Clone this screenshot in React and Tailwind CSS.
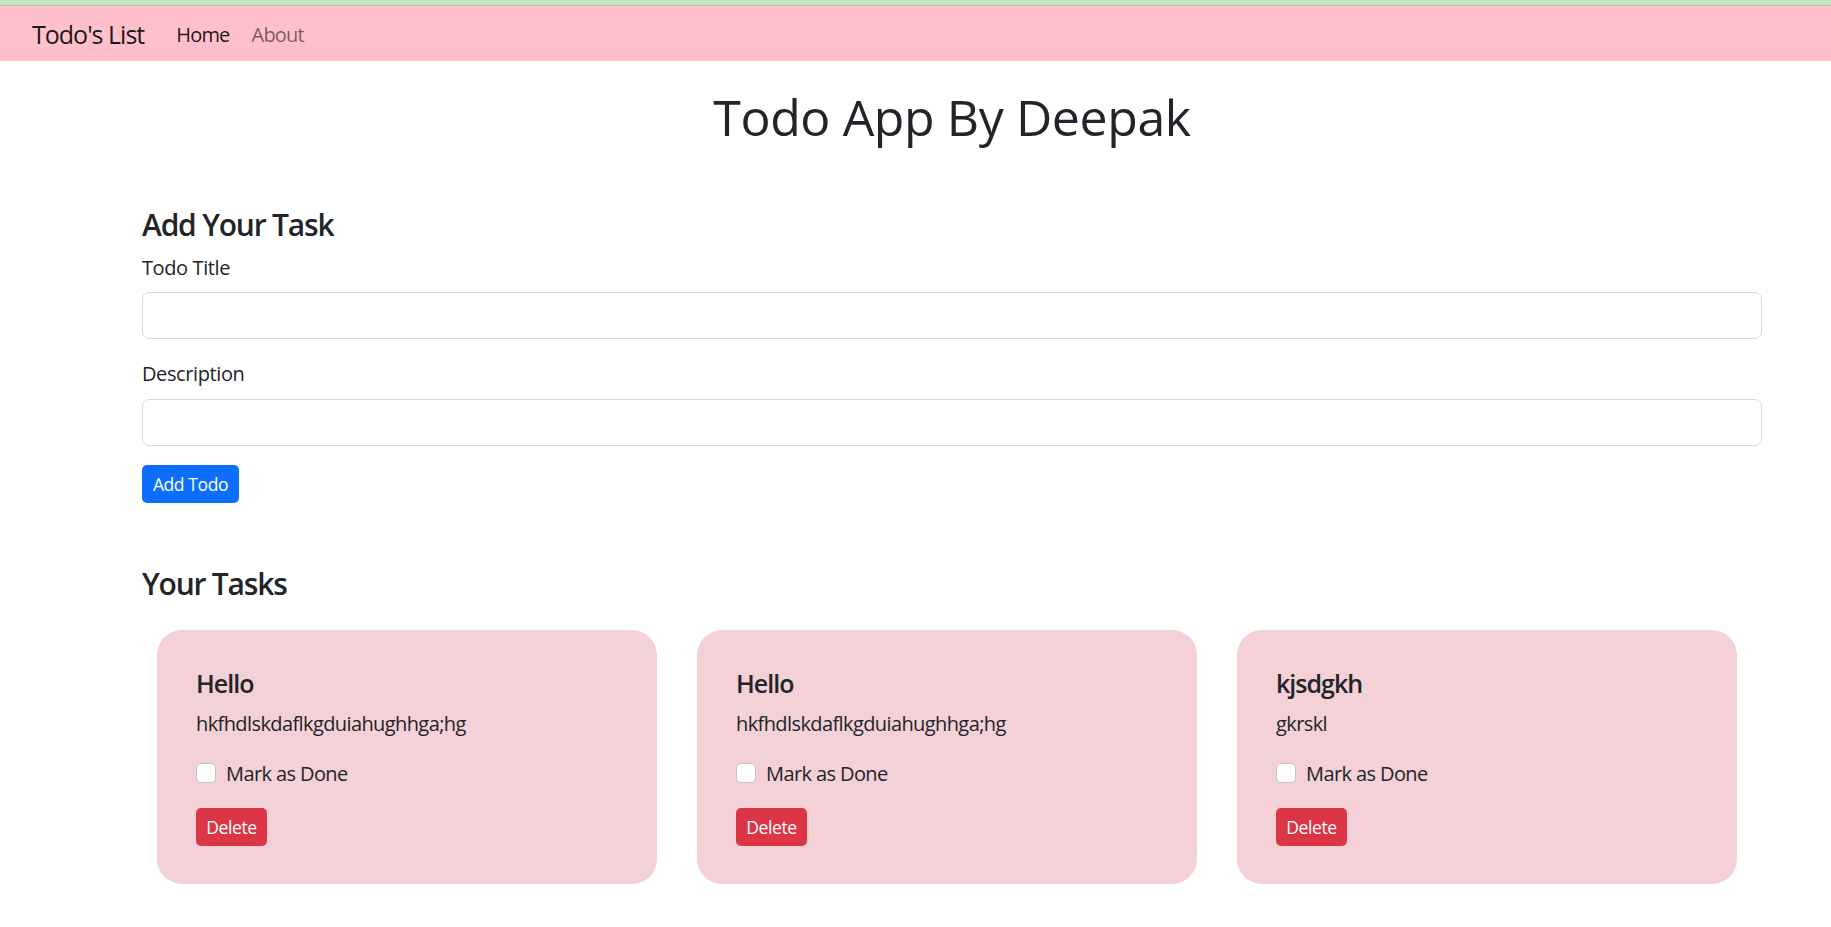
import React, { useState } from "react";

const TODOS = [
    { sno: 1, title: "Hello", desc: "hkfhdlskdaflkgduiahughhga;hg" },
    { sno: 2, title: "Hello", desc: "hkfhdlskdaflkgduiahughhga;hg" },
    { sno: 3, title: "kjsdgkh", desc: "gkrskl" },
];

const TodoItem = ({ todo, onDelete }) => {
    return (
        <div className="w-[500px] h-[254px] rounded-[25px] bg-[#f4d0d7] px-[39px] pt-[38px]">
            <h5 className="text-[25px] leading-[30px] font-semibold tracking-[-0.04em]">{todo.title}</h5>
            <p className="mt-[11px] text-[20px] leading-[30px] tracking-[-0.03em]">{todo.desc}</p>
            <label className="mt-[20px] flex items-center h-[30px] text-[20px] tracking-[-0.03em]">
                <input type="checkbox" className="appearance-none w-[20px] h-[20px] bg-white border border-[#c4c4c4] rounded-[5px] mr-[10px] mt-[-2px]" />
                <span>Mark as Done</span>
            </label>
            <button
                onClick={() => onDelete(todo)}
                className="mt-[19px] w-[71px] h-[38px] rounded-[5px] bg-[#dc3545] text-white text-[17.5px] flex items-center justify-center"
            >
                Delete
            </button>
        </div>
    );
};

export default function App() {
    const [todos, setTodos] = useState(TODOS);
    const [title, setTitle] = useState("");
    const [desc, setDesc] = useState("");

    const onDelete = (todo) => {
        setTodos(todos.filter((t) => t !== todo));
    };

    const addTodo = (e) => {
        e.preventDefault();
        if (!title || !desc) return;
        setTodos([...todos, { sno: todos.length + 1, title: title, desc: desc }]);
        setTitle("");
        setDesc("");
    };

    return (
        <div className="min-h-screen bg-white text-[#212529] font-['Open_Sans',sans-serif] tracking-[-0.025em]">
            <div className="h-[6px] bg-[#c3e3c5] border-b border-[#a9c9aa]" />
            <nav className="h-[55px] bg-[#ffc0cb] flex items-center pl-[32px] pt-[3px]">
                <a href="#" className="text-[25px] text-black/90 tracking-[-0.04em]">Todo's List</a>
                <a href="#" className="ml-[32px] text-[20px] text-black/90 tracking-[-0.04em]">Home</a>
                <a href="#" className="ml-[22px] text-[20px] text-black/55 tracking-[-0.04em]">About</a>
            </nav>

            <div className="ml-[142px] w-[1620px]">
                <h1 className="mt-[26px] text-center text-[50px] leading-[60px] font-medium">Todo App By Deepak</h1>

                <h3 className="mt-[60px] text-[30px] leading-[36px] font-semibold tracking-[-0.04em]">Add Your Task</h3>
                <form onSubmit={addTodo}>
                    <label className="block mt-[10px] text-[20px] leading-[30px]">Todo Title</label>
                    <input
                        value={title}
                        onChange={(e) => setTitle(e.target.value)}
                        className="block mt-[9px] w-full h-[47px] rounded-[7px] border border-[#d5d9de] px-[15px] text-[20px] outline-none"
                    />
                    <label className="block mt-[20px] text-[20px] leading-[30px]">Description</label>
                    <input
                        value={desc}
                        onChange={(e) => setDesc(e.target.value)}
                        className="block mt-[10px] w-full h-[47px] rounded-[7px] border border-[#d5d9de] px-[15px] text-[20px] outline-none"
                    />
                    <button type="submit" className="mt-[19px] w-[97px] h-[38px] rounded-[5px] bg-[#0d6efd] text-white text-[17.5px] flex items-center justify-center">
                        Add Todo
                    </button>
                </form>

                <h3 className="mt-[63px] text-[30px] leading-[36px] font-semibold tracking-[-0.04em]">Your Tasks</h3>
                <div className="mt-[28px] pl-[15px] flex gap-[40px]">
                    {todos.length === 0 ? (
                        <p className="text-[20px]">No Todos to display</p>
                    ) : (
                        todos.map((todo, i) => <TodoItem key={i} todo={todo} onDelete={onDelete} />)
                    )}
                </div>
            </div>
        </div>
    );
}
